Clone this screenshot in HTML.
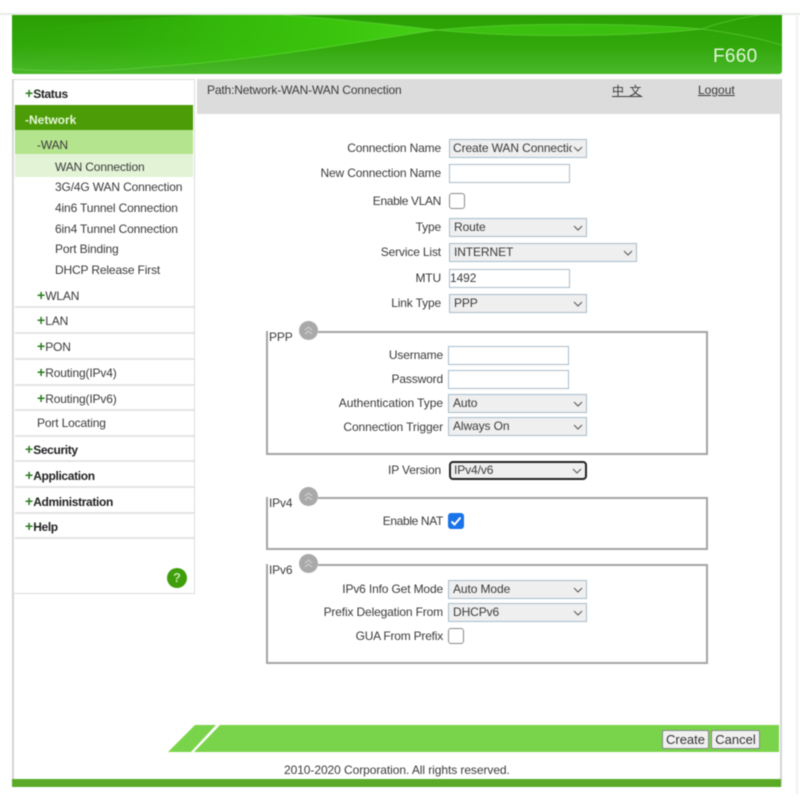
<!DOCTYPE html>
<html><head><meta charset="utf-8"><style>
html,body{margin:0;padding:0;background:#fff}
#p{position:relative;width:800px;height:800px;overflow:hidden;background:#fff;font-family:"Liberation Sans","Noto Sans CJK SC",sans-serif;font-size:12px;color:#3a3a3a;filter:blur(.45px)}
#p div{position:absolute;box-sizing:border-box;white-space:nowrap}
.t{line-height:16px;height:16px;letter-spacing:-.15px}
.l{text-align:right;line-height:16px;height:16px;letter-spacing:-.15px;left:250px}
.s{background:#efefef;border:1px solid #a9bccb;height:19px;line-height:17px;padding-left:4px;letter-spacing:-.1px;overflow:hidden}
.s svg{position:absolute;right:3px;top:4px}
.i{background:#fff;border:1px solid #a9bccb;height:19px;line-height:17px;width:121px;letter-spacing:-.1px}
.c{width:16px;height:16px;background:#fff;border:1px solid #8a8a8a;border-radius:3px}
.sep{left:15px;width:179px;height:2px;background:#e4e4e4}
.b{font-weight:bold;color:#222;letter-spacing:-.35px}
.g{color:#2b7d1f;font-weight:bold;font-size:14px;letter-spacing:0}
.line{background:#a4a4a4}
.btn{background:#f0f0f0;border:1px solid #888;border-radius:2px;height:19px;line-height:17px;text-align:center;color:#333;font-size:13px}
.o{width:19px;height:19px;border-radius:50%;background:#a9a9a9}
.o svg{position:absolute;left:4px;top:4px}
</style></head><body><div id="p">
<div style="left:0;top:13px;width:800px;height:2px;background:#e6ebe4"></div>
<div style="left:12px;top:15px;width:770px;height:59px;border-radius:0 0 3px 3px;overflow:hidden;background:linear-gradient(#2aa005 0%,#30a70a 50%,#4ab82a 100%)">
<svg width="770" height="59" style="position:absolute;left:0;top:0"><defs><linearGradient id="a" x1="0" x2="1"><stop offset="0" stop-color="#38c00c" stop-opacity="0"/><stop offset=".25" stop-color="#38c00c" stop-opacity=".2"/><stop offset=".5" stop-color="#38c00c" stop-opacity=".75"/><stop offset=".75" stop-color="#3ac40c"/><stop offset="1" stop-color="#46d018"/></linearGradient></defs>
<path d="M0 15C110 5 200 -4 271 0C330 4 380 10 425 15C350 26 240 48 138 52C80 57 30 57 0 54Z" fill="url(#a)"/>
<path d="M425 15C500 7 620 8 690 14C620 22 500 23 425 15Z" fill="#45d015" opacity=".65"/>
<path d="M0 54C60 58 100 56 138 52C240 46 350 26 425 15C500 7 620 8 690 14C720 3 750 0 770 -4" fill="none" stroke="#6fdc4a" stroke-width="1" opacity=".5"/>
<path d="M271 0C330 4 380 10 425 15C500 23 620 22 690 14C720 18 750 24 770 30" fill="none" stroke="#6fdc4a" stroke-width="1" opacity=".5"/></svg></div>
<div style="left:713px;top:46px;font-size:19px;line-height:22px;color:#e3f5da;letter-spacing:.3px">F660</div>

<div style="left:12px;top:79px;width:2px;height:707px;background:#d4d4d4"></div>
<div style="left:780px;top:79px;width:2px;height:707px;background:#d4d4d4"></div>
<div style="left:796px;top:14px;width:2px;height:780px;background:#f2f2f2"></div>

<div style="left:13px;top:79px;width:182px;height:515px;background:#fff;border:1px solid #dcdcdc"></div>
<div style="left:15px;top:105px;width:178px;height:25px;background:#4b9c06"></div>
<div style="left:15px;top:130px;width:178px;height:24px;background:#b5e48f"></div>
<div style="left:15px;top:154px;width:178px;height:23px;background:#e3f4d6"></div>

<div class="t b" style="left:25px;top:85px"><span class="g">+</span>Status</div>
<div class="t b" style="left:25px;top:112px;color:#e6f6da;letter-spacing:0">-Network</div>
<div class="t" style="left:37px;top:137px">-WAN</div>
<div class="t" style="left:55px;top:159px">WAN Connection</div>
<div class="t" style="left:55px;top:179px">3G/4G WAN Connection</div>
<div class="t" style="left:55px;top:200px">4in6 Tunnel Connection</div>
<div class="t" style="left:55px;top:221px">6in4 Tunnel Connection</div>
<div class="t" style="left:55px;top:241px">Port Binding</div>
<div class="t" style="left:55px;top:262px">DHCP Release First</div>
<div class="t" style="left:37px;top:287px"><span class="g">+</span>WLAN</div>
<div class="t" style="left:37px;top:312px"><span class="g">+</span>LAN</div>
<div class="t" style="left:37px;top:338px"><span class="g">+</span>PON</div>
<div class="t" style="left:37px;top:364px"><span class="g">+</span>Routing(IPv4)</div>
<div class="t" style="left:37px;top:390px"><span class="g">+</span>Routing(IPv6)</div>
<div class="t" style="left:37px;top:415px">Port Locating</div>
<div class="t b" style="left:25px;top:441px"><span class="g">+</span>Security</div>
<div class="t b" style="left:25px;top:467px"><span class="g">+</span>Application</div>
<div class="t b" style="left:25px;top:493px"><span class="g">+</span>Administration</div>
<div class="t b" style="left:25px;top:518px"><span class="g">+</span>Help</div>
<div class="sep" style="top:306px"></div><div class="sep" style="top:332px"></div><div class="sep" style="top:358px"></div><div class="sep" style="top:384px"></div><div class="sep" style="top:409px"></div><div class="sep" style="top:435px"></div><div class="sep" style="top:460px"></div><div class="sep" style="top:486px"></div><div class="sep" style="top:512px"></div><div class="sep" style="top:537px"></div>
<div style="left:167px;top:568px;width:20px;height:20px;border-radius:50%;background:#3f9e0c;color:#bfe8a8;font-size:13px;font-weight:bold;line-height:20px;text-align:center">?</div>

<div style="left:197px;top:79px;width:584px;height:35px;background:#dcdcdc"></div>
<div class="t" style="left:207px;top:82px">Path:Network-WAN-WAN Connection</div>
<div class="t" style="left:612px;top:83px;text-decoration:underline;letter-spacing:1px">中 文</div>
<div class="t" style="left:698px;top:82px;text-decoration:underline;letter-spacing:0">Logout</div>

<div class="l" style="top:140px;width:191px">Connection Name</div>
<div class="s" style="left:449px;top:139px;width:138px"><div style="left:3px;top:0;width:119px;overflow:hidden">Create WAN Connection</div><svg width="10" height="10" viewBox="0 0 10 10" style="right:3px"><path d="M1 3l4 4 4-4" fill="none" stroke="#555" stroke-width="1"/></svg></div>
<div class="l" style="top:165px;width:191px">New Connection Name</div>
<div class="i" style="left:449px;top:164px"></div>
<div class="l" style="top:193px;width:191px;letter-spacing:-.35px">Enable VLAN</div>
<div class="c" style="left:449px;top:193px"></div>
<div class="l" style="top:219px;width:191px">Type</div>
<div class="s" style="left:449px;top:218px;width:138px">Route<svg width="10" height="10"><path d="M1 3l4 4 4-4" fill="none" stroke="#555"/></svg></div>
<div class="l" style="top:244px;width:191px">Service List</div>
<div class="s" style="left:449px;top:243px;width:188px">INTERNET<svg width="10" height="10"><path d="M1 3l4 4 4-4" fill="none" stroke="#555"/></svg></div>
<div class="l" style="top:270px;width:191px">MTU</div>
<div class="i" style="left:449px;top:269px">1492</div>
<div class="l" style="top:295px;width:191px">Link Type</div>
<div class="s" style="left:449px;top:294px;width:138px">PPP<svg width="10" height="10"><path d="M1 3l4 4 4-4" fill="none" stroke="#555"/></svg></div>

<div class="line" style="left:266px;top:331px;width:2px;height:123px"></div>
<div class="line" style="left:266px;top:453px;width:441px;height:2px"></div>
<div class="line" style="left:706px;top:331px;width:2px;height:124px"></div>
<div class="line" style="left:318px;top:331px;width:389px;height:2px"></div>
<div class="t" style="left:269px;top:329px">PPP</div>
<div class="o" style="left:299px;top:321px"><svg width="11" height="11"><path d="M2 5l3.500-3 3.500 3M2 9l3.500-3 3.500 3" fill="none" stroke="#d4d4d4"/></svg></div>
<div class="l" style="top:347px;width:193px">Username</div>
<div class="i" style="left:448px;top:346px"></div>
<div class="l" style="top:371px;width:193px">Password</div>
<div class="i" style="left:448px;top:370px"></div>
<div class="l" style="top:395px;width:193px;letter-spacing:-.05px">Authentication Type</div>
<div class="s" style="left:448px;top:394px;width:139px">Auto<svg width="10" height="10"><path d="M1 3l4 4 4-4" fill="none" stroke="#555"/></svg></div>
<div class="l" style="top:419px;width:193px;letter-spacing:-.1px">Connection Trigger</div>
<div class="s" style="left:448px;top:417px;width:139px">Always On<svg width="10" height="10"><path d="M1 3l4 4 4-4" fill="none" stroke="#555"/></svg></div>

<div class="l" style="top:462px;width:191px">IP Version</div>
<div class="s" style="left:449px;top:461px;width:138px;border:2px solid #222;border-radius:4px;line-height:15px;padding-left:3px">IPv4/v6<svg width="10" height="10" style="top:3px"><path d="M1 3l4 4 4-4" fill="none" stroke="#555"/></svg></div>

<div class="line" style="left:266px;top:497px;width:2px;height:52px"></div>
<div class="line" style="left:266px;top:548px;width:441px;height:2px"></div>
<div class="line" style="left:706px;top:497px;width:2px;height:53px"></div>
<div class="line" style="left:318px;top:497px;width:389px;height:2px"></div>
<div class="t" style="left:269px;top:495px">IPv4</div>
<div class="o" style="left:299px;top:487px"><svg width="11" height="11"><path d="M2 5l3.500-3 3.500 3M2 9l3.500-3 3.500 3" fill="none" stroke="#d4d4d4"/></svg></div>
<div class="l" style="top:513px;width:193px;letter-spacing:-.35px">Enable NAT</div>
<div class="c" style="left:448px;top:513px;background:#1a73e8;border-color:#1a73e8"><svg width="14" height="14" style="position:absolute;left:0;top:0"><path d="M2.500 7.500l3 3 6-7" fill="none" stroke="#fff" stroke-width="2"/></svg></div>

<div class="line" style="left:266px;top:564px;width:2px;height:100px"></div>
<div class="line" style="left:266px;top:662px;width:441px;height:2px"></div>
<div class="line" style="left:706px;top:564px;width:2px;height:100px"></div>
<div class="line" style="left:318px;top:564px;width:389px;height:2px"></div>
<div class="t" style="left:269px;top:562px">IPv6</div>
<div class="o" style="left:299px;top:554px"><svg width="11" height="11"><path d="M2 5l3.500-3 3.500 3M2 9l3.500-3 3.500 3" fill="none" stroke="#d4d4d4"/></svg></div>
<div class="l" style="top:581px;width:193px">IPv6 Info Get Mode</div>
<div class="s" style="left:448px;top:580px;width:139px">Auto Mode<svg width="10" height="10"><path d="M1 3l4 4 4-4" fill="none" stroke="#555"/></svg></div>
<div class="l" style="top:604px;width:193px">Prefix Delegation From</div>
<div class="s" style="left:448px;top:603px;width:139px">DHCPv6<svg width="10" height="10"><path d="M1 3l4 4 4-4" fill="none" stroke="#555"/></svg></div>
<div class="l" style="top:628px;width:193px;letter-spacing:-.22px">GUA From Prefix</div>
<div class="c" style="left:448px;top:628px"></div>

<svg width="70" height="28" style="position:absolute;left:165px;top:725px"><path d="M3 27L30 0H51L26 27Z" fill="#7ad44b"/><path d="M29 27L55 0H56V27Z" fill="#7ad44b"/></svg>
<div style="left:220px;top:725px;width:559px;height:27px;background:#7ad44b"></div>
<div class="btn" style="left:662px;top:730px;width:47px">Create</div>
<div class="btn" style="left:711px;top:730px;width:49px">Cancel</div>
<div class="t" style="left:284px;top:762px;letter-spacing:-.07px">2010-2020 Corporation. All rights reserved.</div>
<div style="left:12px;top:779px;width:769px;height:8px;background:#5aaa28"></div>
</div></body></html>
